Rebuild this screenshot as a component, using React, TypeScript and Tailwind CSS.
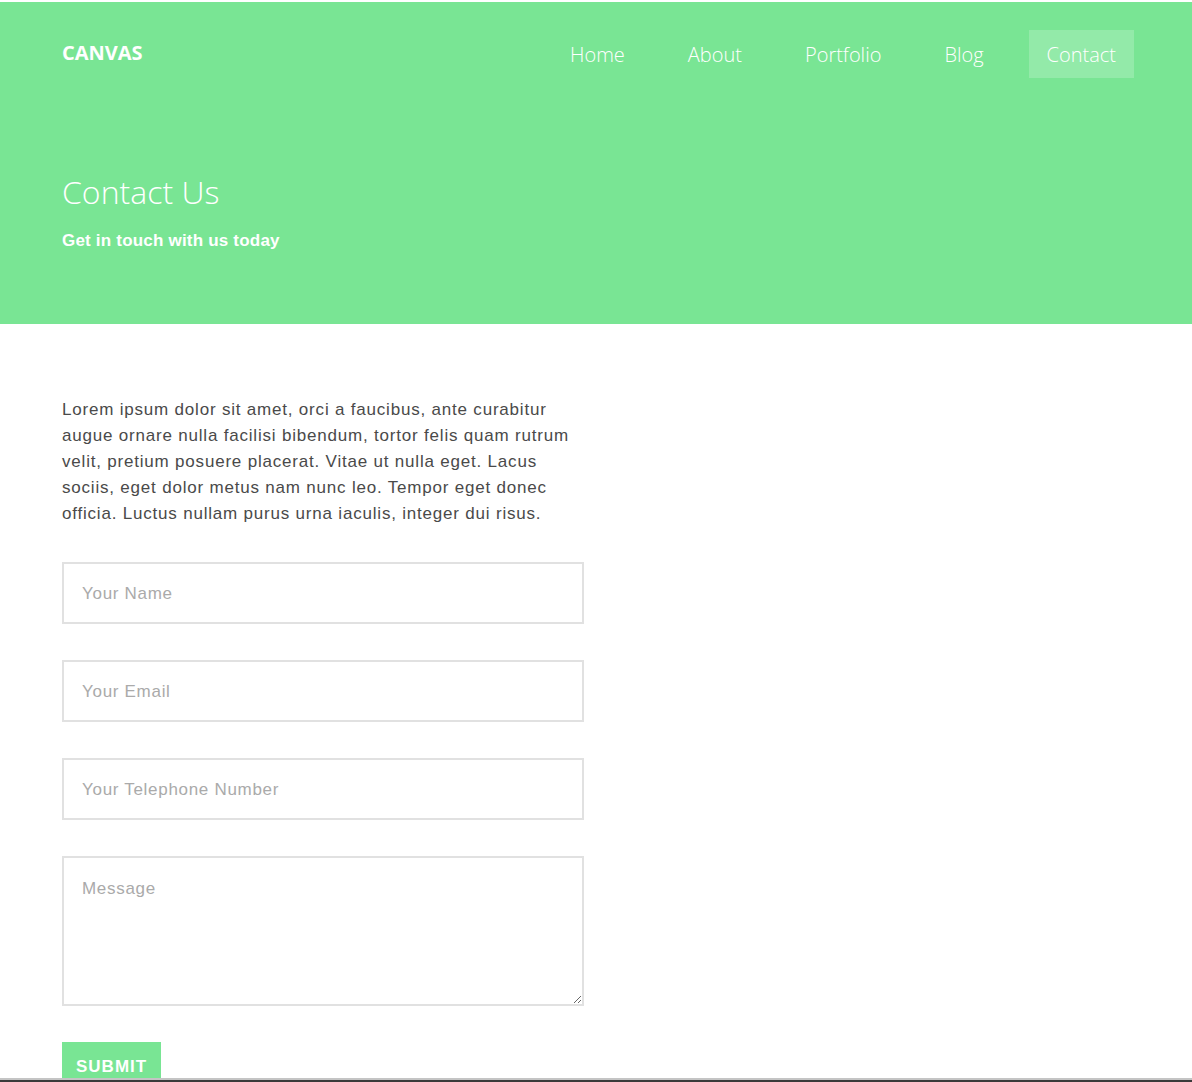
import React from 'react';

const nav = ['Home', 'About', 'Portfolio', 'Blog', 'Contact'];

const fields = ['Your Name', 'Your Email', 'Your Telephone Number'];

const App: React.FC = () => {
  return (
    <div className="min-h-screen bg-white pt-[2px]" style={{ fontFamily: '"Liberation Sans", Arial, sans-serif' }}>
      {/* Hero */}
      <header className="bg-[#79e594] h-[322px] px-[62px] text-white">
        <div className="flex items-center justify-between pt-[28px]" style={{ fontFamily: '"Open Sans", sans-serif' }}>
          <div className="text-[20px] font-bold -mt-[2px]">CANVAS</div>
          <nav className="flex gap-[27px] -mr-[4px]">
            {nav.map((n) => (
              <a
                key={n}
                href="#"
                className={
                  'h-[48px] px-[18px] pt-[2px] flex items-center text-[20px] font-light ' +
                  (n === 'Contact' ? 'bg-white/20' : '')
                }
              >
                {n}
              </a>
            ))}
          </nav>
        </div>
        <h1
          className="mt-[94px] text-[32px] leading-[40px] font-light"
          style={{ fontFamily: '"Open Sans", sans-serif' }}
        >
          Contact Us
        </h1>
        <p className="mt-[16px] text-[17px] leading-[26px] font-semibold tracking-[0.2px]">Get in touch with us today</p>
      </header>

      {/* Form */}
      <main className="px-[62px] pt-[73px]">
        <div className="w-[522px]">
          <p className="text-[17px] leading-[26px] text-[#4a4a4a] tracking-[0.8px]">
            Lorem ipsum dolor sit amet, orci a faucibus, ante curabitur augue ornare nulla facilisi bibendum, tortor
            felis quam rutrum velit, pretium posuere placerat. Vitae ut nulla eget. Lacus sociis, eget dolor metus nam
            nunc leo. Tempor eget donec officia. Luctus nullam purus urna iaculis, integer dui risus.
          </p>
          <form className="mt-[35px] flex flex-col gap-[36px]">
            {fields.map((f) => (
              <input
                key={f}
                type="text"
                placeholder={f}
                className="h-[62px] w-full border-2 border-[#e1e1e1] px-[18px] pt-[2px] text-[17px] tracking-[0.7px] text-[#444] placeholder:text-[#aaa] outline-none"
              />
            ))}
            <textarea
              placeholder="Message"
              className="h-[150px] w-full border-2 border-[#e1e1e1] px-[18px] py-[18px] text-[17px] leading-[26px] tracking-[0.7px] text-[#444] placeholder:text-[#aaa] outline-none"
            />
            <div>
              <button
                type="button"
                className="bg-[#79e594] text-white text-[17px] leading-[26px] font-bold px-[14px] py-[12px] tracking-[1px]"
              >
                SUBMIT
              </button>
            </div>
          </form>
        </div>
      </main>

      {/* window edge */}
      <div className="fixed bottom-0 left-0 right-0 h-[4px] bg-[#3a3a3a] border-t-2 border-[#c4c4c4]" />
    </div>
  );
};

export default App;
